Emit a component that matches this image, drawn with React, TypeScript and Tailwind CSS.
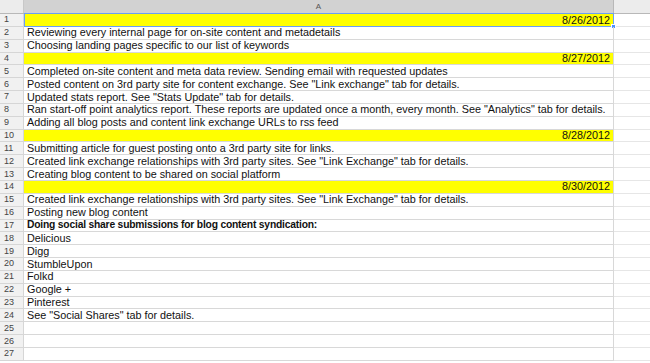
import React from "react";

type Row = { text?: string; date?: string; bold?: boolean };

const rows: Row[] = [
  { date: "8/26/2012" },
  { text: "Reviewing every internal page for on-site content and metadetails" },
  { text: "Choosing landing pages specific to our list of keywords" },
  { date: "8/27/2012" },
  { text: "Completed on-site content and meta data review. Sending email with requested updates" },
  { text: 'Posted content on 3rd party site for content exchange. See "Link exchange" tab for details.' },
  { text: 'Updated stats report. See "Stats Update" tab for details.' },
  { text: 'Ran start-off point analytics report. These reports are updated once a month, every month. See "Analytics" tab for details.' },
  { text: "Adding all blog posts and content link exchange URLs to rss feed" },
  { date: "8/28/2012" },
  { text: "Submitting article for guest posting onto a 3rd party site for links." },
  { text: 'Created link exchange relationships with 3rd party sites. See "Link Exchange" tab for details.' },
  { text: "Creating blog content to be shared on social platform" },
  { date: "8/30/2012" },
  { text: 'Created link exchange relationships with 3rd party sites. See "Link Exchange" tab for details.' },
  { text: "Posting new blog content" },
  { text: "Doing social share submissions for blog content syndication:", bold: true },
  { text: "Delicious" },
  { text: "Digg" },
  { text: "StumbleUpon" },
  { text: "Folkd" },
  { text: "Google +" },
  { text: "Pinterest" },
  { text: 'See "Social Shares" tab for details.' },
  {},
  {},
  {},
];

export default function App() {
  return (
    <div
      className="w-[650px] h-[363px] overflow-hidden bg-white text-[#111]"
      style={{ fontFamily: '"Liberation Sans", Arial, sans-serif' }}
    >
      <div className="flex h-[14px] border-b border-[#b8b8b8]">
        <div className="w-[24px] shrink-0 bg-[#ececec] border-r border-[#c8c8c8]" />
        <div className="w-[590px] shrink-0 bg-[#d2d2d2] border-r border-[#b8b8b8] flex items-center justify-center text-[8px] text-[#555]">
          A
        </div>
        <div className="flex-1 bg-[#ececec]" />
      </div>
      {rows.map((r, i) => (
        <div key={i} className="flex h-[12.85px]">
          <div className="w-[24px] shrink-0 bg-[#f1f1f1] border-r border-b border-[#d6d6d6] text-[9px] text-[#444] pl-[4px] flex items-center leading-none">
            {i + 1}
          </div>
          <div
            className={
              "relative w-[590px] shrink-0 border-r border-b border-[#d8d8d8] flex items-center px-[3px] text-[10.8px] leading-none whitespace-nowrap " +
              (r.date ? "bg-[#ffff00] justify-end" : "overflow-hidden")
            }
          >
            {r.date ? (
              <span>{r.date}</span>
            ) : (
              <span className={r.bold ? "font-bold text-[10.3px] tracking-[-0.2px]" : ""}>{r.text}</span>
            )}
            {i === 0 && (
              <>
                <div className="absolute -top-[1px] left-0 -right-[1px] -bottom-[1px] border border-[#6a9ff5] pointer-events-none" />
                <div className="absolute -right-[3px] -bottom-[3px] w-[5px] h-[5px] bg-[#4d90fe] border border-white" />
              </>
            )}
          </div>
          <div className="flex-1 border-b border-[#e6e6e6]" />
        </div>
      ))}
    </div>
  );
}
